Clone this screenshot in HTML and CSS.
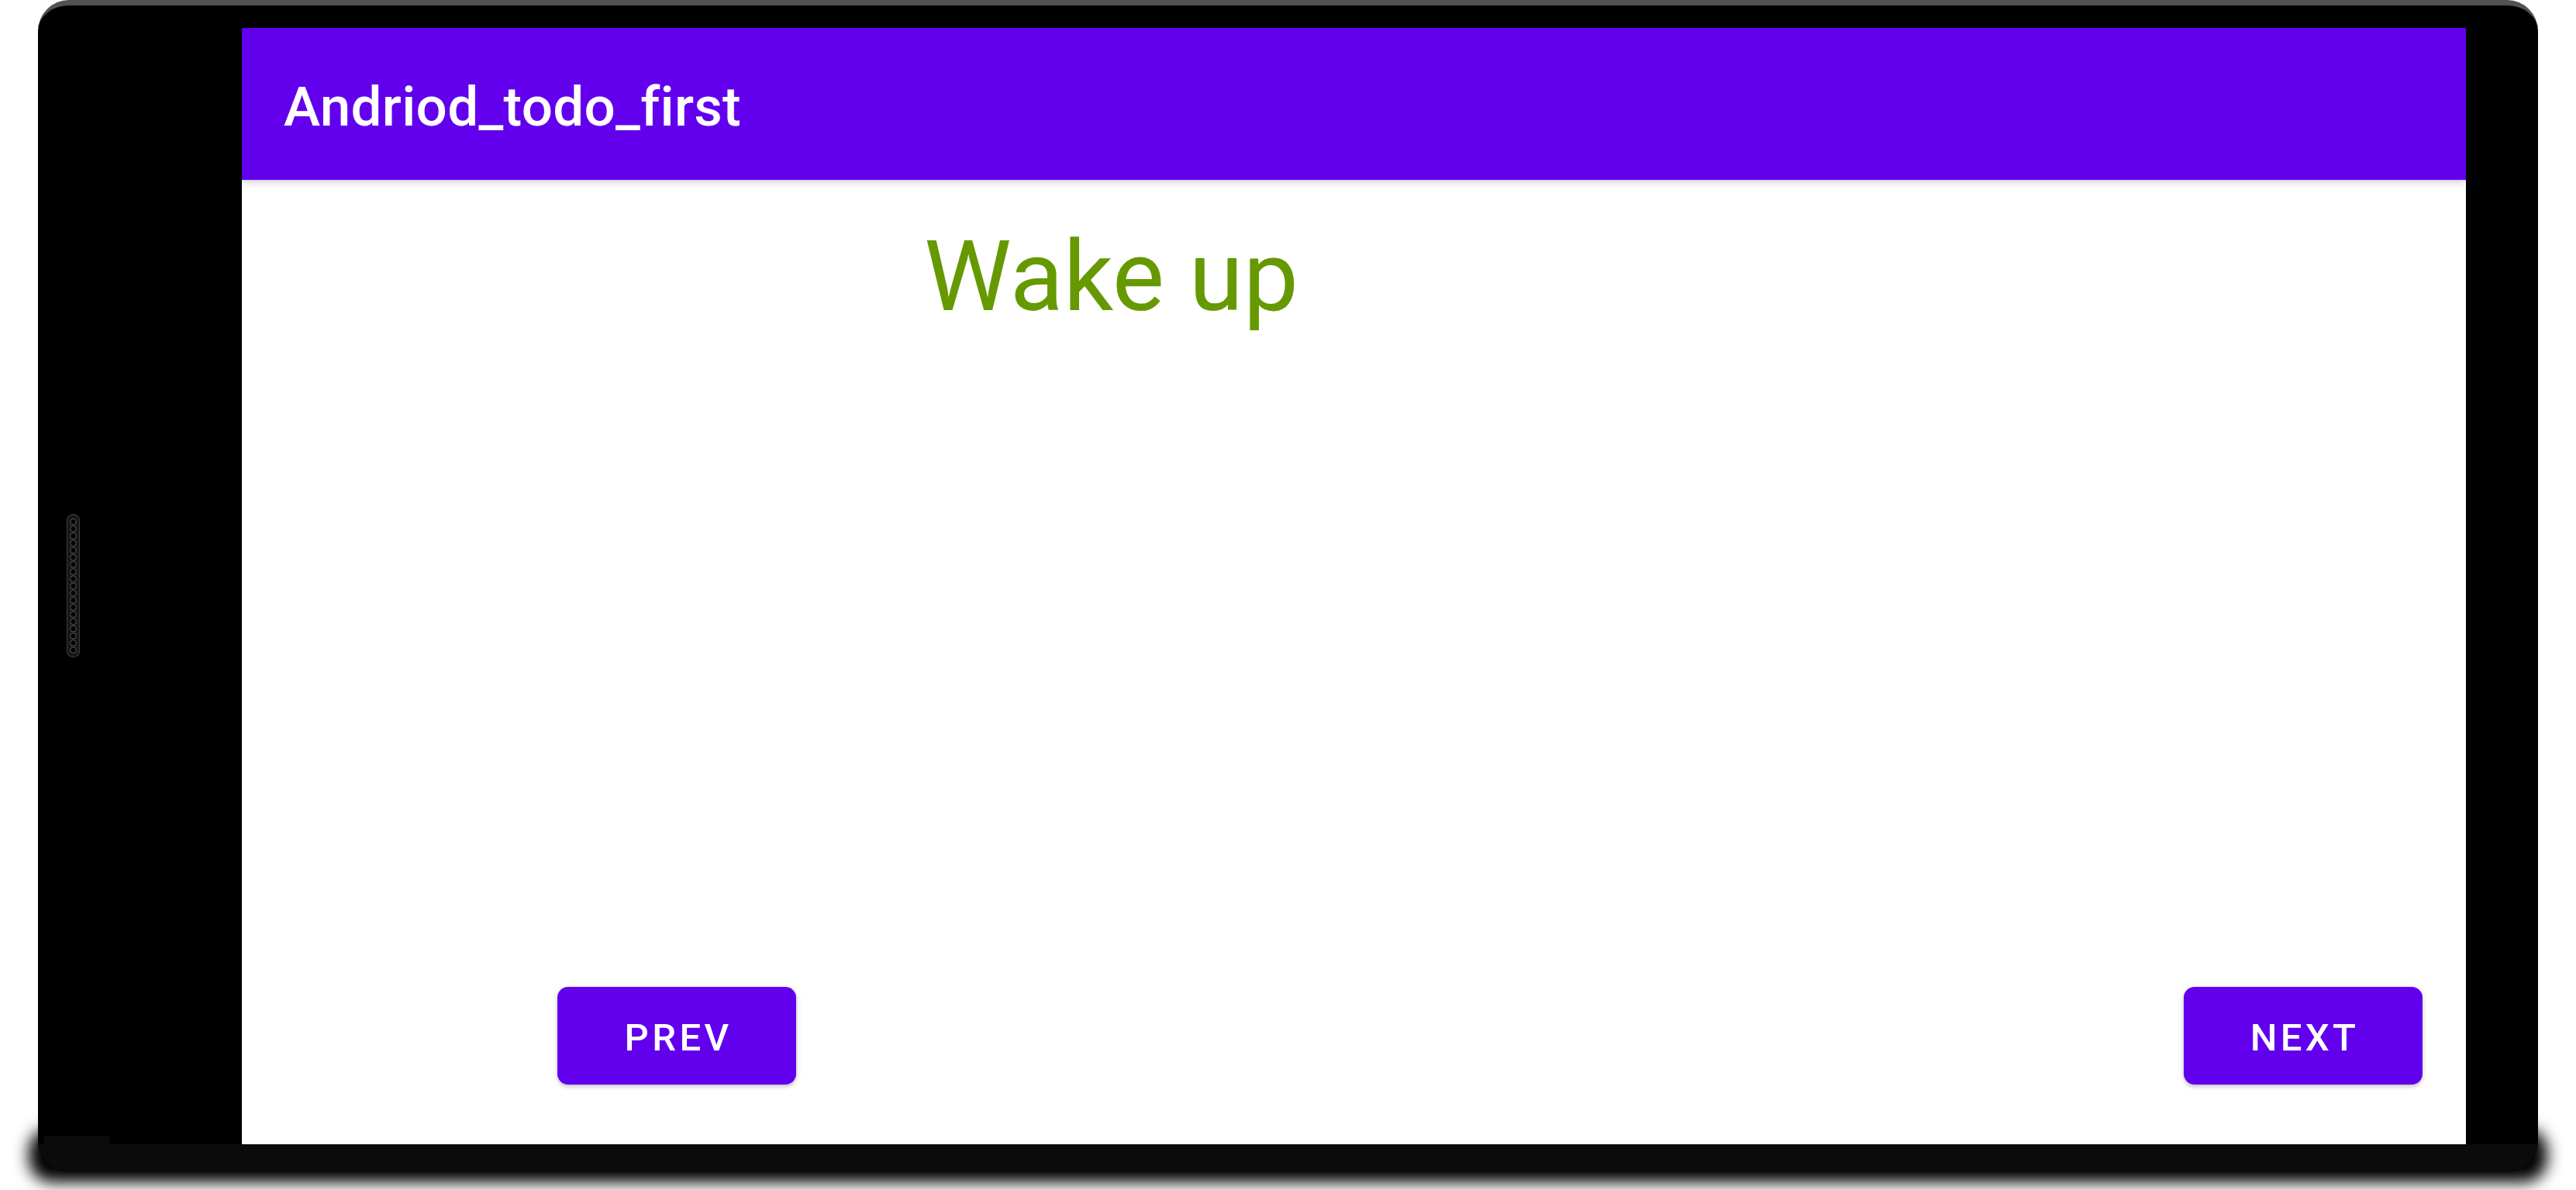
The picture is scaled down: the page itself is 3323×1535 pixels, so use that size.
FILE: index.html
```html
<!DOCTYPE html>
<html>
<head>
<meta charset="utf-8">
<link rel="stylesheet" href="styles.css">
</head>
<body>
<div class="phone">
  <div class="phone-shadow"></div>
  <div class="device">
    <div class="bezel-top"></div>
    <div class="bezel-left">
      <svg class="grille" width="17" height="185" viewBox="0 0 17 185">
        <rect x="0.5" y="0.5" width="16" height="184" rx="8" fill="#161616" stroke="#3a3a3a" stroke-width="1.2"/>
        <g fill="#000" stroke="#5a5a5a" stroke-width="1">
          <circle cx="8.5" cy="10" r="3.8"/><circle cx="8.5" cy="19.2" r="3.8"/><circle cx="8.5" cy="28.4" r="3.8"/>
          <circle cx="8.5" cy="37.6" r="3.8"/><circle cx="8.5" cy="46.8" r="3.8"/><circle cx="8.5" cy="56" r="3.8"/>
          <circle cx="8.5" cy="65.2" r="3.8"/><circle cx="8.5" cy="74.4" r="3.8"/><circle cx="8.5" cy="83.6" r="3.8"/>
          <circle cx="8.5" cy="92.8" r="3.8"/><circle cx="8.5" cy="102" r="3.8"/><circle cx="8.5" cy="111.2" r="3.8"/>
          <circle cx="8.5" cy="120.4" r="3.8"/><circle cx="8.5" cy="129.6" r="3.8"/><circle cx="8.5" cy="138.8" r="3.8"/>
          <circle cx="8.5" cy="148" r="3.8"/><circle cx="8.5" cy="157.2" r="3.8"/><circle cx="8.5" cy="166.4" r="3.8"/>
          <circle cx="8.5" cy="175.6" r="3.8"/>
        </g>
      </svg>
    </div>
    <div class="screen">
      <div class="appbar"><span class="title">Andriod_todo_first</span></div>
      <div class="content">
        <div class="task">Wake up</div>
      </div>
      <div class="actions">
        <button class="btn">Prev</button>
        <button class="btn">Next</button>
      </div>
    </div>
    <div class="bezel-right"></div>
    <div class="nav-tab"></div>
    <div class="bezel-bottom"></div>
  </div>
</div>
</body>
</html>
```

FILE: styles.css
```css
html, body {
  margin: 0;
  padding: 0;
  background: #ffffff;
}
body {
  width: 3323px;
  height: 1535px;
  overflow: hidden;
  padding-left: 49px;
  box-sizing: border-box;
}
.phone {
  position: relative;
  width: 3225px;
  height: 1512px;
}
.phone-shadow {
  position: absolute;
  left: -12px;
  right: -12px;
  top: 1455px;
  bottom: -13px;
  background: #000;
  border-radius: 30px;
  filter: blur(10px);
}
.device {
  position: relative;
  width: 3225px;
  height: 1512px;
  box-sizing: border-box;
  background: #000;
  border-top: 7px solid #525252;
  border-radius: 40px;
  display: grid;
  grid-template-columns: 263px 2869px 93px;
  grid-template-rows: 29px 1429px 11px 36px;
  overflow: hidden;
}
.bezel-top {
  grid-column: 1 / 4;
  grid-row: 1;
}
.bezel-left {
  grid-column: 1;
  grid-row: 1 / 3;
  display: flex;
  align-items: flex-start;
  padding-left: 37px;
  padding-top: 656px;
}
.grille {
  display: block;
}
.screen {
  grid-column: 2;
  grid-row: 2 / 4;
  background: #ffffff;
  display: flex;
  flex-direction: column;
  font-family: Roboto, "Liberation Sans", sans-serif;
}
.bezel-right {
  grid-column: 3;
  grid-row: 2 / 4;
}
.nav-tab {
  grid-column: 1;
  grid-row: 3;
  margin-left: 8px;
  width: 84px;
  background: #0b0b0b;
}
.bezel-bottom {
  grid-column: 1 / 4;
  grid-row: 4;
  background: #0b0b0b;
}
.appbar {
  height: 196px;
  flex: 0 0 196px;
  background: #6200ee;
  box-shadow: 0 4px 10px rgba(0, 0, 0, 0.14), 0 1px 4px rgba(0, 0, 0, 0.1);
  display: flex;
  align-items: center;
  padding-left: 54px;
  padding-top: 6px;
  box-sizing: border-box;
  position: relative;
  z-index: 1;
}
.title {
  color: #ffffff;
  font-size: 71px;
  font-weight: 500;
  letter-spacing: 0.004em;
}
.content {
  flex: 1;
  padding-left: 880px;
  padding-top: 50px;
}
.task {
  color: #669900;
  font-size: 127px;
  font-weight: 400;
  line-height: normal;
}
.actions {
  display: flex;
  justify-content: space-between;
  padding: 0 56px 77px 407px;
}
.btn {
  width: 308px;
  height: 126px;
  border: none;
  border-radius: 14px;
  background: #6200ee;
  color: #ffffff;
  font-family: Roboto, "Liberation Sans", sans-serif;
  font-size: 49px;
  font-weight: 500;
  letter-spacing: 0.0892em;
  text-transform: uppercase;
  padding: 5px 0 0 4px;
  box-shadow: 0 3px 4px rgba(0, 0, 0, 0.16), 0 1px 10px rgba(0, 0, 0, 0.1);
}
```
